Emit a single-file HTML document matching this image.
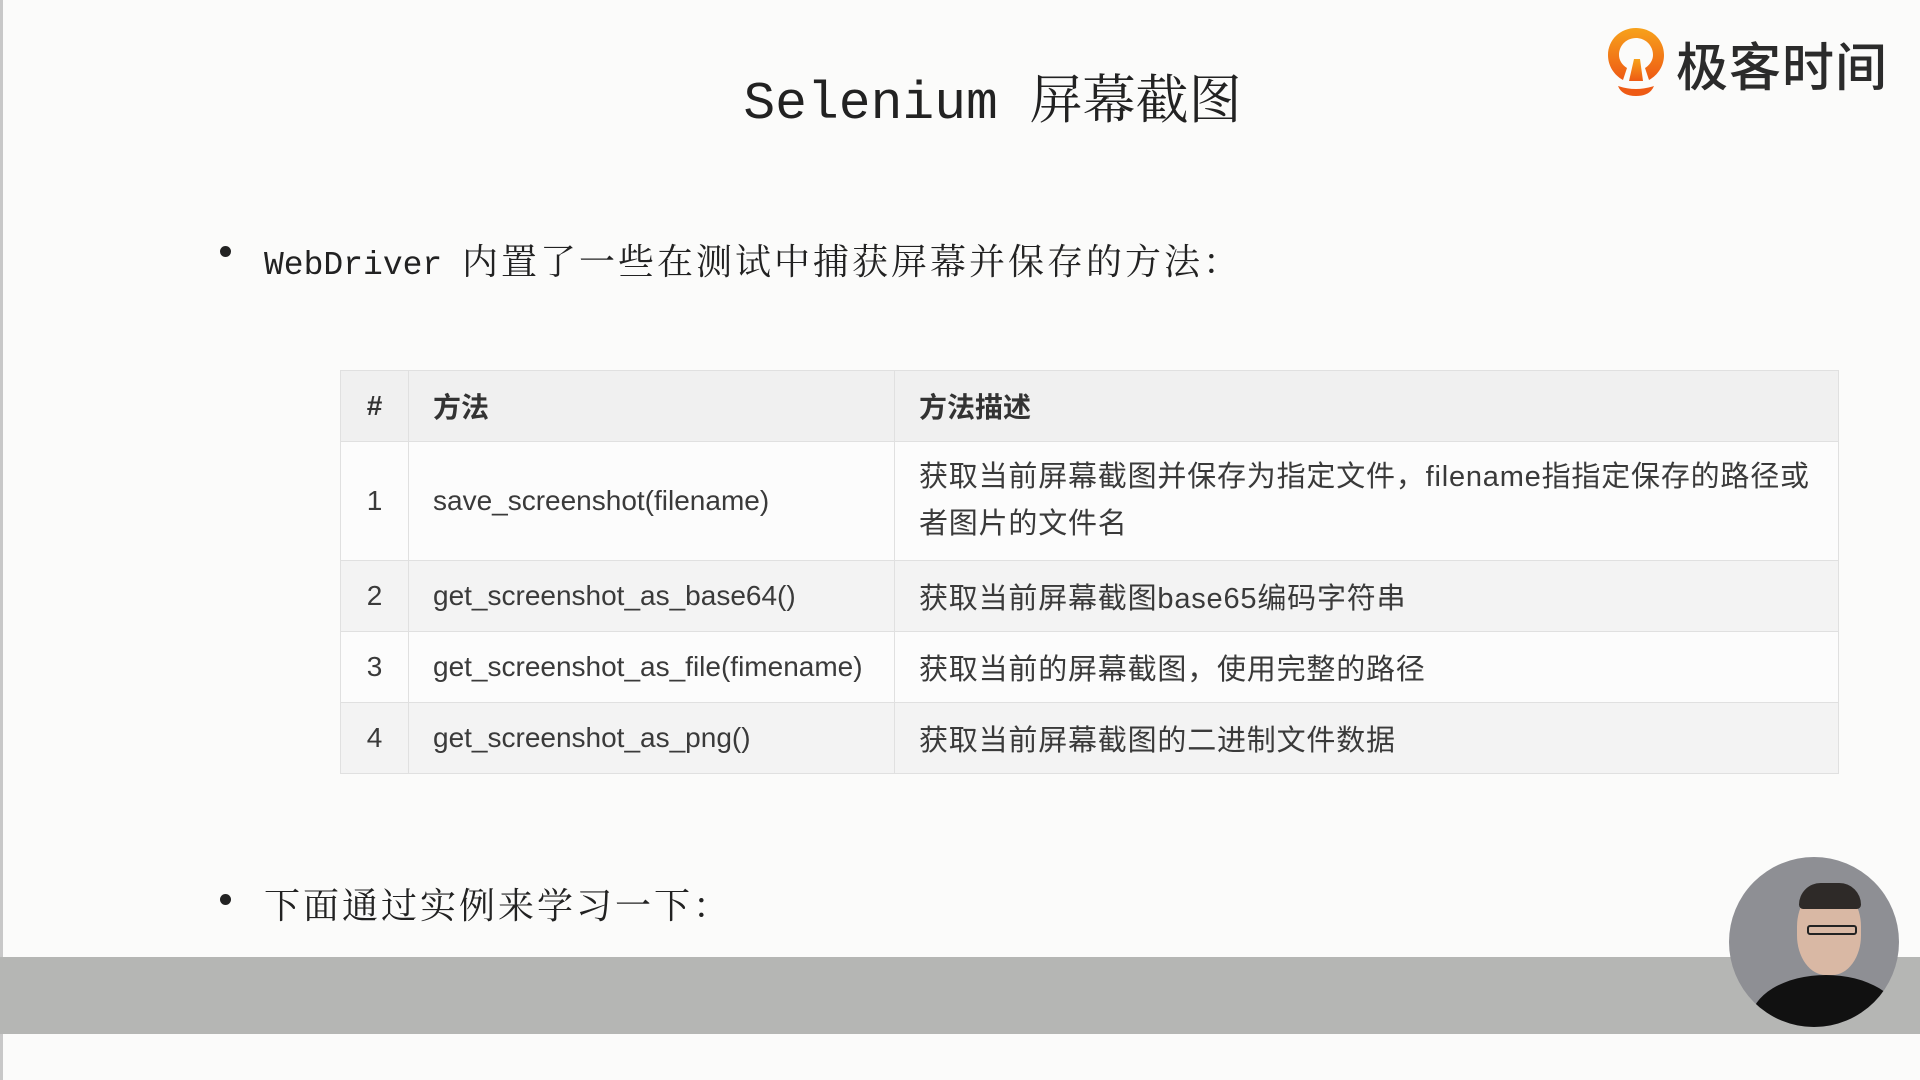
<!DOCTYPE html>
<html><head><meta charset="utf-8"><style>
*{margin:0;padding:0;box-sizing:border-box}
body{width:1920px;height:1080px;background:#fbfbfa;position:relative;overflow:hidden;font-family:"Liberation Sans","Noto Sans CJK SC",sans-serif;color:#333}
.lb{position:absolute;left:0;top:0;width:3px;height:1080px;background:#c8c8c8}
.title{position:absolute;left:0;width:1985px;top:58px;text-align:center;font-size:53px;font-family:"Liberation Mono","Noto Serif CJK SC",monospace;color:#222}
.bul{position:absolute;font-family:"Liberation Mono","Noto Serif CJK SC",monospace;font-size:33px;color:#222}
.cj{font-size:36px;letter-spacing:3px}
.dot{position:absolute;width:11px;height:11px;border-radius:50%;background:#222}
table{position:absolute;left:340px;top:370px;width:1499px;border-collapse:collapse;font-size:28px;color:#3a3a3a}
td,th{border:1.5px solid #e0e0e0;padding:0 24px;text-align:left;vertical-align:middle}
th{font-weight:bold;height:71px;background:#f0f0f0;color:#333}
td.d{font-size:29px;letter-spacing:0.8px}
tr.g td{background:#f3f3f3}
tr.w td{background:#fcfcfc}
td.n,th.n{width:68px;text-align:center;padding:0}
.bar{position:absolute;left:0;top:957px;width:1920px;height:77px;background:#b5b6b4}
.av{position:absolute;left:1729px;top:857px;width:170px;height:170px;border-radius:50%;background:#8e8f94;overflow:hidden}
</style></head><body>
<div class="lb"></div>
<div class="title">Selenium 屏幕截图</div>
<svg style="position:absolute;left:1605px;top:26px" width="62" height="72" viewBox="0 0 62 72">
<defs><linearGradient id="g" x1="0" y1="0" x2="0" y2="1"><stop offset="0" stop-color="#f7a21b"/><stop offset="1" stop-color="#ee5a14"/></linearGradient></defs>
<path d="M31 2C15 2 3 14 3 29c0 11 6 20 15 25l4-12c-5-3-8-8-8-13 0-10 8-17 17-17s17 7 17 17c0 5-3 10-8 13l4 12c9-5 15-14 15-25C59 14 47 2 31 2z" fill="url(#g)"/>
<path d="M24 55l5-22h6l3 22z" fill="url(#g)"/>
<path d="M13 60q18 6 36 0q-4 10-18 10q-14 0-18-10z" fill="#ee5a14"/>
</svg>
<div style="position:absolute;left:1676px;top:30px;font-size:52px;font-weight:500;color:#2b2b2b;font-family:'Noto Sans CJK SC',sans-serif;letter-spacing:1px;line-height:68px">极客时间</div>
<div class="dot" style="left:220px;top:246px"></div>
<div class="bul" style="left:264px;top:234px">WebDriver <span class="cj">内置了一些在测试中捕获屏幕并保存的方法：</span></div>
<table>
<tr><th class="n">#</th><th style="width:486px">方法</th><th>方法描述</th></tr>
<tr class="w" style="height:119px"><td class="n">1</td><td>save_screenshot(filename)</td><td class="d" style="line-height:47px">获取当前屏幕截图并保存为指定文件，filename指指定保存的路径或<br>者图片的文件名</td></tr>
<tr class="g" style="height:71px"><td class="n">2</td><td>get_screenshot_as_base64()</td><td class="d">获取当前屏幕截图base65编码字符串</td></tr>
<tr class="w" style="height:71px"><td class="n">3</td><td>get_screenshot_as_file(fimename)</td><td class="d">获取当前的屏幕截图，使用完整的路径</td></tr>
<tr class="g" style="height:71px"><td class="n">4</td><td>get_screenshot_as_png()</td><td class="d">获取当前屏幕截图的二进制文件数据</td></tr>
</table>
<div class="dot" style="left:220px;top:894px"></div>
<div class="bul cj" style="left:264px;top:878px">下面通过实例来学习一下：</div>
<div class="bar"></div>
<div class="av">
<div style="position:absolute;left:68px;top:30px;width:64px;height:88px;border-radius:45%;background:#d9b8a4"></div>
<div style="position:absolute;left:70px;top:26px;width:62px;height:26px;border-radius:30px 30px 6px 6px;background:#2e2a28"></div>
<div style="position:absolute;left:78px;top:68px;width:50px;height:10px;border:2px solid #222;border-radius:3px"></div>
<div style="position:absolute;left:22px;top:118px;width:150px;height:90px;border-radius:50% 50% 0 0;background:#111"></div>
</div>
</body></html>
